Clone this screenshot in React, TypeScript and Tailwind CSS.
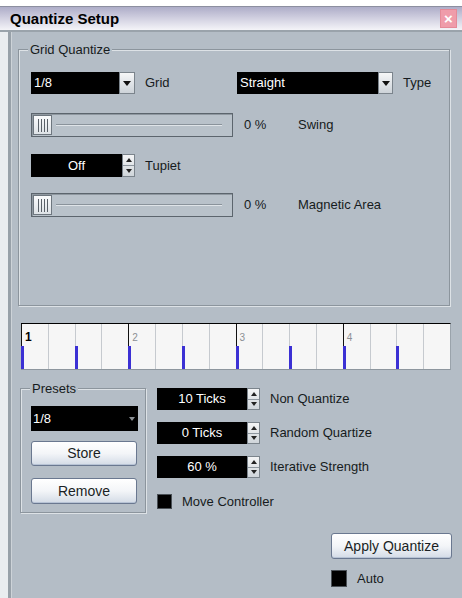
import React from "react";

function DropArrow({ w }: { w: string }) {
  return (
    <div
      className={`${w} h-full flex items-center justify-center border border-[#7b848c] bg-gradient-to-b from-[#f6f7f8] to-[#cdd3d9]`}
    >
      <svg width="8" height="5" viewBox="0 0 8 5">
        <path d="M0 0 L8 0 L4 5 Z" fill="#111" />
      </svg>
    </div>
  );
}

function Spinner() {
  return (
    <div className="w-[13px] h-full flex flex-col border border-[#7b848c] bg-gradient-to-b from-[#f4f5f6] to-[#cfd5da]">
      <div className="flex-1 flex items-center justify-center border-b border-[#8e979f]">
        <svg width="6" height="4" viewBox="0 0 6 4">
          <path d="M0 4 L6 4 L3 0 Z" fill="#222" />
        </svg>
      </div>
      <div className="flex-1 flex items-center justify-center">
        <svg width="6" height="4" viewBox="0 0 6 4">
          <path d="M0 0 L6 0 L3 4 Z" fill="#222" />
        </svg>
      </div>
    </div>
  );
}

function Slider() {
  return (
    <div className="w-[202px] h-[24px] border border-[#5c656d] bg-[#b9c2ca] shadow-[inset_1px_1px_0_#8f98a0] flex items-center">
      <div className="ml-[1px] w-[19px] h-[20px] border border-[#6e777f] bg-gradient-to-b from-[#fafbfc] to-[#dde2e6] flex items-center justify-center gap-[2px]">
        <div className="w-[1px] h-[13px] bg-[#5a6168]" />
        <div className="w-[1px] h-[13px] bg-[#5a6168]" />
        <div className="w-[1px] h-[13px] bg-[#5a6168]" />
        <div className="w-[1px] h-[13px] bg-[#5a6168]" />
      </div>
      <div className="ml-[4px] mr-[10px] flex-1 h-[2px] border-t border-[#8a939b] border-b border-b-[#dfe4e8]" />
    </div>
  );
}

function Button({ label, cls }: { label: string; cls: string }) {
  return (
    <div
      className={`${cls} rounded-[3px] border border-[#6a7890] bg-gradient-to-b from-white via-[#f3f5f8] to-[#d3dbe6] shadow-[inset_0_-1px_0_#b7c3d5] flex items-center justify-center text-[14px] text-[#1a1f24]`}
    >
      {label}
    </div>
  );
}

function SpinField({ value, label, mt }: { value: string; label: string; mt: string }) {
  return (
    <div className={`${mt} flex items-center h-[22px]`}>
      <div className="w-[90px] h-full bg-black text-white flex items-center justify-center">{value}</div>
      <Spinner />
      <span className="ml-[10px]">{label}</span>
    </div>
  );
}

const cells = Array.from({ length: 16 }, (_, i) => i);

export default function App() {
  return (
    <div className="w-[462px] h-[598px] overflow-hidden bg-white font-['Liberation_Sans',Arial,sans-serif] text-[13px] text-[#161b20] flex flex-col">
      <div className="h-[6px] bg-white shrink-0" />
      <div className="h-[26px] shrink-0 border-t border-[#8d8fa0] border-b-2 border-b-[#9aa3ab] bg-gradient-to-b from-[#aeadc8] via-[#d2d1e1] to-[#f4f4f8] flex items-center pl-[10px] pr-[5px]">
        <span className="font-bold text-[15px] text-black leading-none">Quantize Setup</span>
        <div className="ml-auto w-[17px] h-[19px] bg-[#ef9caa] border border-[#e48a98] flex items-center justify-center text-white text-[15px] leading-none font-bold">
          ×
        </div>
      </div>
      <div className="flex flex-1">
        <div className="w-[8px] bg-[#eaedf0]" />
        <div className="w-[4px] bg-[#98a1a9] border-r border-[#cdd3d8]" />
        <div className="flex-1 bg-[#b4bdc6] flex flex-col">
          {/* Grid Quantize group */}
          <div className="relative mt-[17px] ml-[6px] w-[432px] h-[257px] border border-[#8c959d] shadow-[inset_1px_1px_0_#dde2e6,1px_1px_0_#dde2e6] pt-[22px] pl-[12px]">
            <span className="absolute left-[9px] -top-[8px] px-[2px] bg-[#b4bdc6] leading-[15px]">Grid Quantize</span>
            <div className="flex items-center h-[22px]">
              <div className="w-[206px] h-full flex items-center">
                <div className="w-[88px] h-full bg-black text-white flex items-center pl-[3px]">1/8</div>
                <DropArrow w="w-[16px]" />
                <span className="ml-[10px]">Grid</span>
              </div>
              <div className="w-[141px] h-full bg-black text-white flex items-center pl-[3px]">Straight</div>
              <DropArrow w="w-[15px]" />
              <span className="ml-[10px]">Type</span>
            </div>
            <div className="mt-[19px] h-[24px] flex items-center">
              <Slider />
              <span className="ml-[11px] w-[54px]">0 %</span>
              <span>Swing</span>
            </div>
            <div className="mt-[17px] h-[23px] flex items-center">
              <div className="w-[91px] h-full bg-black text-white flex items-center justify-center">Off</div>
              <Spinner />
              <span className="ml-[10px]">Tupiet</span>
            </div>
            <div className="mt-[16px] h-[24px] flex items-center">
              <Slider />
              <span className="ml-[11px] w-[54px]">0 %</span>
              <span>Magnetic Area</span>
            </div>
          </div>

          {/* Grid strip */}
          <div className="mt-[17px] ml-[9px] w-[430px] h-[47px] flex border-t border-black border-b border-b-[#8d969e] border-r border-r-[#9aa3ab] bg-[#f6f6f6]">
            {cells.map((i) => {
              const bar = i % 4 === 0;
              const beat = i / 4 + 1;
              return (
                <div
                  key={i}
                  className={`flex-1 flex flex-col border-l ${bar ? "border-[#111]" : "border-[#c6cacf]"}`}
                >
                  <div className="h-[20px] pl-[3px] pt-[6px] leading-none">
                    {bar && i === 0 && <span className="font-bold text-[12px] text-black">1</span>}
                    {bar && i !== 0 && <span className="text-[10px] text-[#8b8f94]">{beat}</span>}
                  </div>
                  {i % 2 === 0 && <div className="mt-auto -ml-[1px] w-[3px] h-[23px] bg-[#3b30d4]" />}
                </div>
              );
            })}
          </div>

          {/* Bottom area */}
          <div className="mt-[18px] flex">
            <div className="relative ml-[8px] w-[126px] h-[125px] border border-[#8c959d] shadow-[inset_1px_1px_0_#dde2e6,1px_1px_0_#dde2e6] pt-[17px] pl-[10px]">
              <span className="absolute left-[9px] -top-[8px] px-[2px] bg-[#b4bdc6] leading-[15px]">Presets</span>
              <div className="w-[107px] h-[25px] bg-black text-white flex items-center pl-[2px]">
                <span>1/8</span>
                <svg className="ml-auto mr-[3px]" width="6" height="4" viewBox="0 0 6 4">
                  <path d="M0 0 L6 0 L3 4 Z" fill="#8a8f94" />
                </svg>
              </div>
              <Button label="Store" cls="mt-[10px] w-[106px] h-[25px]" />
              <Button label="Remove" cls="mt-[12px] w-[106px] h-[26px]" />
            </div>
            <div className="ml-[11px] flex flex-col">
              <SpinField value="10 Ticks" label="Non Quantize" mt="mt-0" />
              <SpinField value="0 Ticks" label="Random Quartize" mt="mt-[12px]" />
              <SpinField value="60 %" label="Iterative Strength" mt="mt-[12px]" />
              <div className="mt-[14px] flex items-center">
                <div className="w-[15px] h-[15px] bg-black border border-[#4a5056]" />
                <span className="ml-[10px]">Move Controller</span>
              </div>
            </div>
          </div>

          <div className="mt-[20px] ml-[319px] flex flex-col">
            <Button label="Apply Quantize" cls="w-[121px] h-[26px]" />
            <div className="mt-[10px] flex items-center">
              <div className="w-[16px] h-[17px] bg-black border border-[#4a5056]" />
              <span className="ml-[10px]">Auto</span>
            </div>
          </div>
        </div>
      </div>
    </div>
  );
}
